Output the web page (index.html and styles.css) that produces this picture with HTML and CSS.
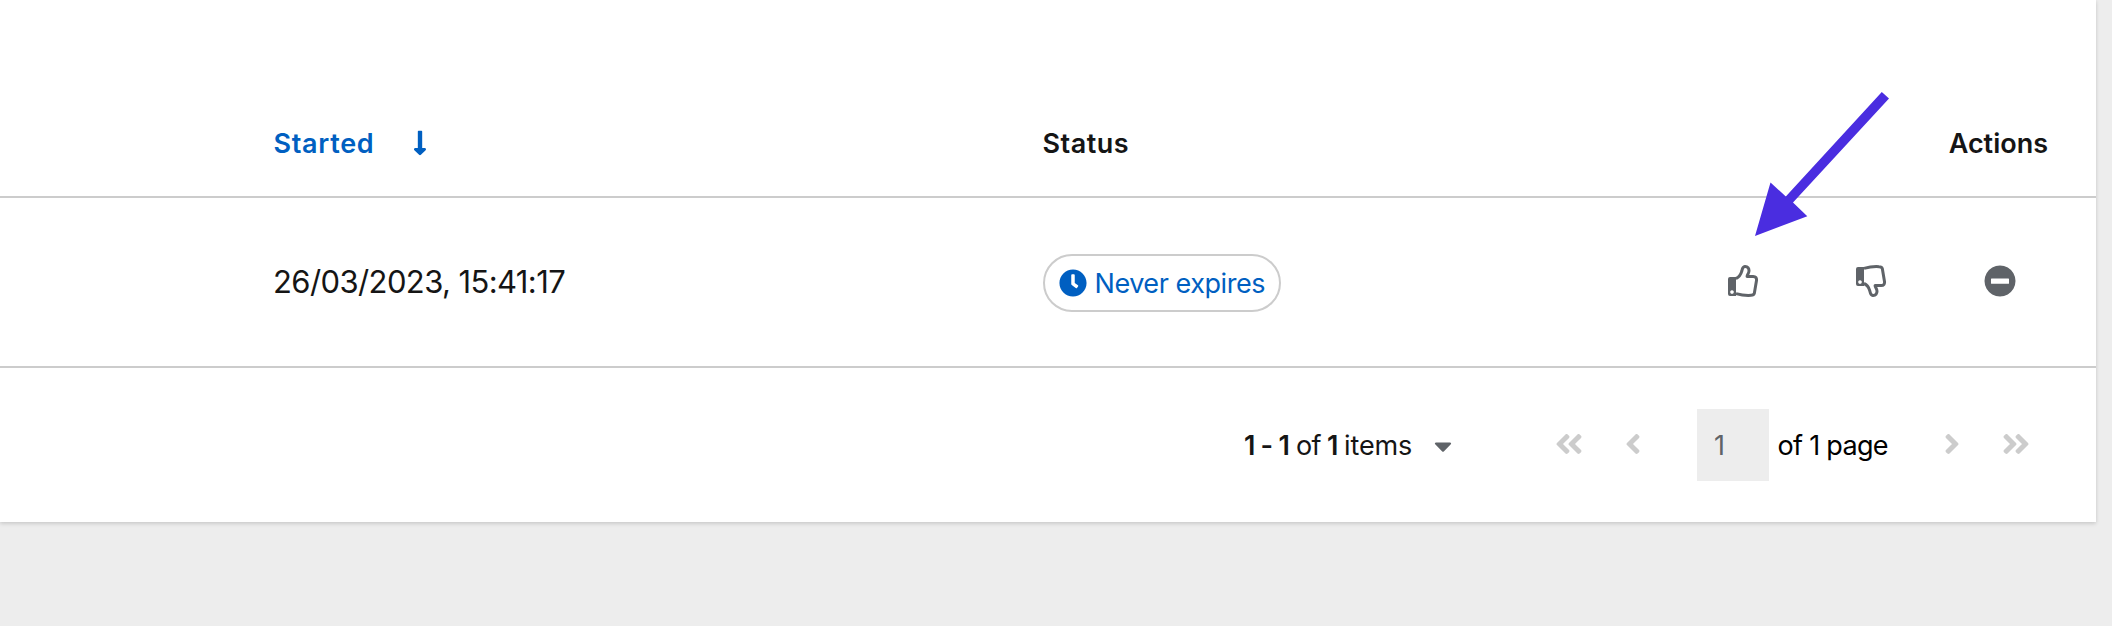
FILE: index.html
```html
<!DOCTYPE html>
<html lang="en">
<head>
<meta charset="utf-8">
<title>Sessions</title>
<link rel="stylesheet" href="styles.css">
</head>
<body>
<main class="card">
  <div class="row head">
    <div class="started sorted"><span class="label-started">Started</span>
      <svg class="sort" viewBox="0 0 256 512"><path d="M168 345.941V44c0-6.627-5.373-12-12-12h-56c-6.627 0-12 5.373-12 12v301.941H41.941c-21.382 0-32.09 25.851-16.971 40.971l86.059 86.059c9.373 9.373 24.569 9.373 33.941 0l86.059-86.059c15.119-15.119 4.411-40.971-16.971-40.971H168z"/></svg>
    </div>
    <div class="status label-status">Status</div>
    <div class="actions-label">Actions</div>
  </div>
  <div class="row item">
    <div class="started date">26/03/2023, 15:41:17</div>
    <div class="status">
      <span class="pill">
        <svg class="clock" viewBox="0 0 512 512"><path d="M256,8C119,8,8,119,8,256S119,504,256,504,504,393,504,256,393,8,256,8Zm92.49,313h0l-20,25a16,16,0,0,1-22.49,2.5h0l-67-49.72a40,40,0,0,1-15-31.23V112a16,16,0,0,1,16-16h32a16,16,0,0,1,16,16V256l58,42.5A16,16,0,0,1,348.49,321Z"/></svg>
        <span class="pill-text">Never expires</span>
      </span>
    </div>
    <div class="actions">
      <svg class="thumb" viewBox="1 0 32 32"><path class="fill" fill-rule="evenodd" d="M3 12H9V31H3Q1 31 1 29V14Q1 12 3 12ZM5 25.2a1.8 1.8 0 1 0 .01 0Z"/><path class="line" d="M9 13.5C11.5 12.5 14 9 14.8 6.2C15.3 3.8 15.6 1.7 17.8 1.6C20.8 1.4 22.1 3.5 22 6C21.8 8.5 20.2 9.8 20.1 11.4H26.2C28.6 11.4 29.8 13 29.5 15.6L27.3 28.4C26.9 30 26 30.3 24 30.3C18 30.7 14 30 9 28.6"/></svg>
      <svg class="thumb" viewBox="1 0 32 32"><path class="fill" fill-rule="evenodd" d="M3 2H9V21H3Q1 21 1 19V4Q1 2 3 2ZM5 15.2a1.8 1.8 0 1 0 .01 0Z"/><path class="line" d="M9 3.4C14 2 18 1.3 24 1.7C26 1.7 26.9 2 27.3 3.6L29.5 16.4C29.8 19 28.6 20.6 26.2 20.6H20.1C20.2 22.2 21.8 23.5 22 26C22.1 28.5 20.8 30.6 17.8 30.4C15.6 30.3 15.3 28.2 14.8 25.8C14 23 11.5 19.5 9 18.5"/></svg>
      <svg class="minus" viewBox="0 0 32 32"><path fill-rule="evenodd" d="M16 .5a15.5 15.5 0 1 0 .01 0ZM7.6 13.4H24.4Q25 13.4 25 14V18.2Q25 18.8 24.4 18.8H7.6Q7 18.8 7 18.2V14Q7 13.4 7.6 13.4Z"/></svg>
    </div>
  </div>
  <div class="row pager">
    <div class="count"><b class="range">1 - 1</b><span class="of">of</span><b class="total">1</b><span class="items">items</span></div>
    <svg class="caret" viewBox="0 0 320 512"><path d="M31.3 192h257.3c17.8 0 26.7 21.5 14.1 34.1L174.1 354.8c-7.8 7.8-20.5 7.8-28.3 0L17.2 226.1C4.6 213.5 13.5 192 31.3 192z"/></svg>
    <svg class="nav first" viewBox="0 0 448 512"><use href="#angle"/><use href="#angle" x="192"/></svg>
    <svg class="nav prev" viewBox="0 0 256 512"><path id="angle" d="M31.7 239l136-136c9.4-9.4 24.6-9.4 33.9 0l22.6 22.6c9.4 9.4 9.4 24.6 0 33.9L127.9 256l96.4 96.4c9.4 9.4 9.4 24.6 0 33.9L201.7 409c-9.4 9.4-24.6 9.4-33.9 0l-136-136c-9.5-9.4-9.5-24.6-.1-34z"/></svg>
    <div class="page">1</div>
    <div class="pages">of 1 page</div>
    <svg class="nav next flip" viewBox="0 0 256 512"><use href="#angle"/></svg>
    <svg class="nav last flip" viewBox="0 0 448 512"><use href="#angle"/><use href="#angle" x="192"/></svg>
  </div>
</main>
<svg class="pointer" viewBox="0 0 140 150"><path d="M131.8 2L139 8.6 43 112.5 57.3 126.3 5 146 20.5 92.6 35.8 106.4Z"/></svg>
</body>
</html>
```
FILE: styles.css
```css
* { box-sizing: border-box; }
body {
  margin: 0;
  height: 626px;
  overflow: hidden;
  background: #ededed;
  color: #151515;
  font: 27px/40px Inter, "Liberation Sans", sans-serif;
  white-space: nowrap;
}
svg { display: block; flex: none; fill: currentColor; }
.card {
  width: 2096px;
  height: 522px;
  background: #fff;
  box-shadow: 0 2px 4px rgba(3, 3, 3, .12), 0 0 4px rgba(3, 3, 3, .06);
}
.row { display: flex; align-items: center; border-bottom: 2px solid #ccc; }
.started { width: 769px; margin-left: 273px; }
.status { width: 600px; }
.head { height: 198px; padding-top: 92px; font-weight: 600; }
.sorted { display: flex; align-items: center; color: #005fc1; }
.label-started { width: 140px; padding-left: .5px; letter-spacing: .7px; }
.sort { width: 14px; height: 28px; margin-bottom: 2px; }
.label-status { padding-left: .5px; letter-spacing: .5px; }
.actions-label { margin-left: auto; margin-right: 48px; letter-spacing: 0; }
.item { height: 170px; }
.date { font-size: 31px; letter-spacing: -.6px; padding-bottom: 1px; }
.pill {
  display: flex;
  align-items: center;
  width: 238px;
  height: 58px;
  margin: 2px 0 0 1px;
  padding: 0 0 1px 14px;
  border: 2px solid #ccc;
  border-radius: 29px;
  color: #005fc1;
}
.clock { width: 28px; height: 28px; }
.pill-text { margin-left: 7.5px; padding-top: 2px; letter-spacing: -.45px; }
.actions {
  display: flex;
  gap: 96px;
  margin-left: auto;
  margin-right: 80px;
  padding-bottom: 2px;
  color: #5f6368;
}
.actions svg { width: 32px; height: 32px; }
.thumb .line { fill: none; stroke: currentColor; stroke-width: 3; stroke-linejoin: round; }
.pager { height: 154px; padding-top: 2px; border: 0; }
.count { display: flex; margin-left: 1244px; width: 169px; }
.count b { font-weight: 600; }
.range { width: 52px; letter-spacing: -.8px; }
.of { width: 31px; letter-spacing: -.6px; }
.total { width: 17px; }
.items { letter-spacing: -.1px; }
.caret { width: 18px; height: 28px; margin-left: 21px; margin-bottom: 1px; color: #5f6368; }
.nav { height: 32px; margin-bottom: 4px; color: #ccc; }
.prev, .next { width: 16px; }
.first, .last { width: 28px; }
.flip { transform: scaleX(-1); }
.first { margin-left: 103px; }
.prev { margin-left: 42px; }
.page {
  width: 72px;
  height: 72px;
  margin-left: 56px;
  margin-bottom: 2px;
  padding: 17px 17px;
  background: #ededed;
  color: #5f6368;
}
.pages { width: 111px; margin-left: 8.5px; color: #000; letter-spacing: -.7px; }
.next { margin-left: 55.5px; }
.last { margin-left: 42px; }
.pointer {
  position: absolute;
  left: 1750px;
  top: 90px;
  width: 140px;
  height: 150px;
  fill: #4a2de0;
}
```
